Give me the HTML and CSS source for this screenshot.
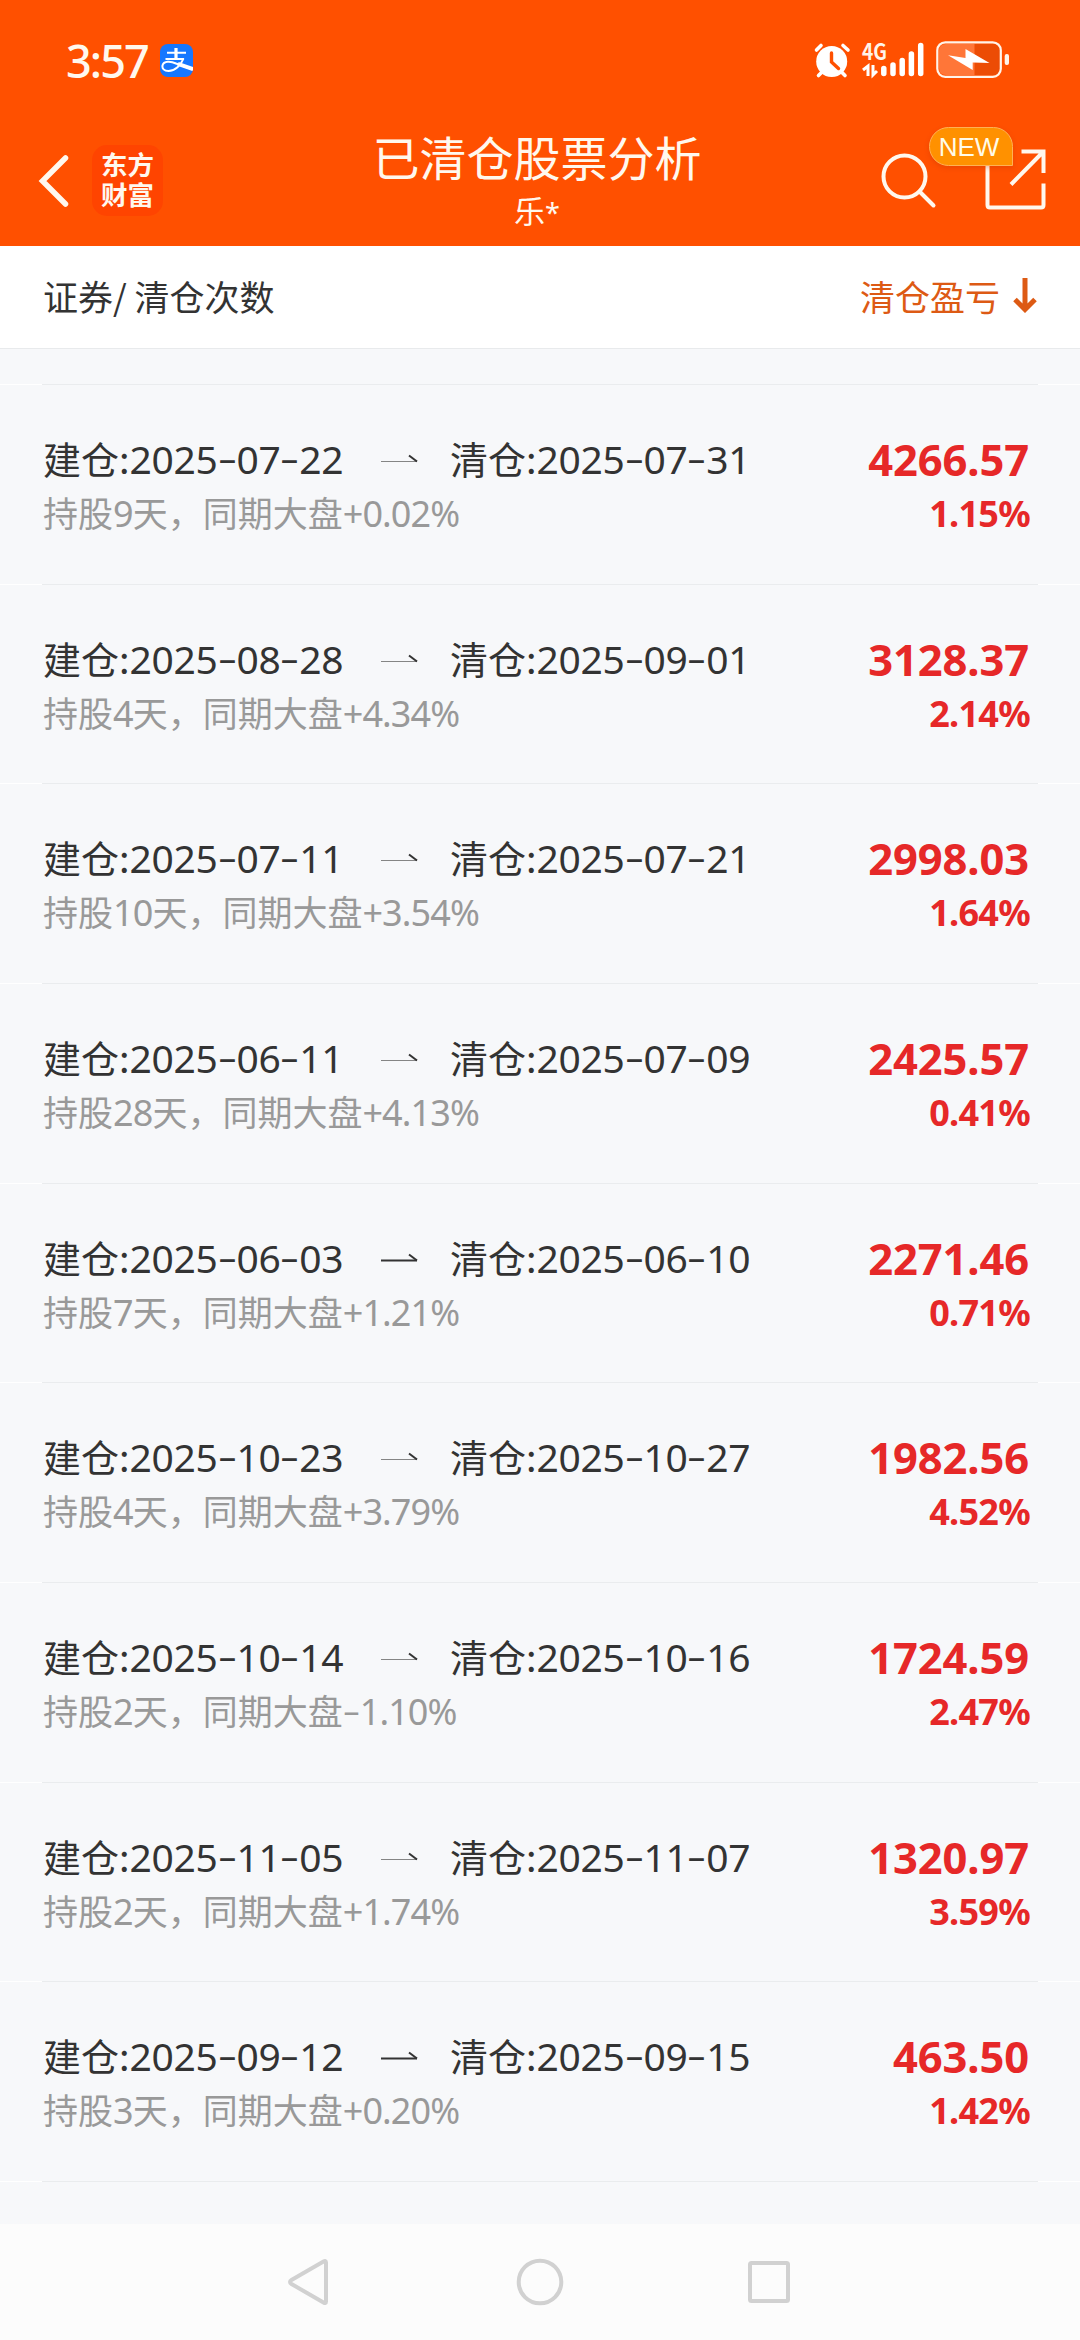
FILE: index.html
```html
<!DOCTYPE html>
<html lang="zh-CN">
<head>
<meta charset="utf-8">
<title>已清仓股票分析</title>
<link rel="stylesheet" href="styles.css">
</head>
<body>
<svg width="0" height="0" class="defs">
  <symbol id="arrow" viewBox="0 0 38 12"><path class="shaft" d="M0 8.500H36"/><path class="head" d="M28 2.500L36 8.500"/></symbol>
</svg>
<div class="screen">
  <header class="top">
    <div class="status">
      <div class="status-left">
        <span class="clock">3:57</span>
        <svg class="pay" viewBox="0 0 33 33"><rect width="33" height="33" rx="8" fill="#1677ff"/><g fill="none" stroke="#fff"><path d="M7 8.800H26M5.500 15H24" stroke-width="2"/><path d="M16 4V15" stroke-width="3.200"/><path d="M23.500 14.500C21 21 15 27 8.500 27C4 27 2 24.500 2.500 21.500C3.500 16.500 11 17 16 19.500L33 25.500" stroke-width="2"/><path d="M18 19.800L33 25" stroke-width="4"/></g></svg>
      </div>
      <svg class="status-right" viewBox="0 0 196 40" width="196" height="40">
        <g transform="translate(-814 -40)">
          <circle cx="831.700" cy="61.500" r="15.500" fill="#fff"/>
          <path d="M816.500 50L821 45.500M848 50L843 45.500M822 72L818.500 75.500M841.500 72L845 75.500" stroke="#fff" stroke-width="3.600" stroke-linecap="round"/>
          <path d="M831.500 53V62L838.500 68.500" fill="none" stroke="#ff5000" stroke-width="3.400" stroke-linecap="round"/>
          <text x="862" y="59.500" class="net" textLength="25" lengthAdjust="spacingAndGlyphs">4G</text>
          <path d="M863 70L868 66V76M873 65V75L877 71" fill="none" stroke="#fff" stroke-width="3"/>
          <path d="M883.800 68.500V73.500M893 65V73.500M902.200 60.500V73.500M911.400 54V73.500M920.700 45.500V73.500" stroke="#fff" stroke-width="5.500" stroke-linecap="round"/>
          <path d="M946 44H974.700V75H946Q939 75 939 68V51Q939 44 946 44" fill="#ff7638"/>
          <path d="M974.700 44H993Q1000 44 1000 51V68Q1000 75 993 75H974.700Z" fill="#ec4c05"/>
          <rect x="937.300" y="42.300" width="63.500" height="34.500" rx="8" fill="none" stroke="#fff4ea" stroke-width="2.200"/>
          <rect x="1004.700" y="54" width="4.300" height="11" rx="2" fill="#fff4ea"/>
          <path d="M948 55.300L965.500 58V49L989.500 63L972.700 62.500V70Z" fill="#fff"/>
        </g>
      </svg>
    </div>
    <nav class="bar">
      <div class="bar-left">
        <svg class="back" viewBox="0 0 32 54" width="32" height="54"><path d="M27.500 4L4.500 27L27.500 50" fill="none" stroke="#fff8ee" stroke-width="5.500" stroke-linecap="round"/></svg>
        <div class="logo"><span>东方</span><span>财富</span></div>
      </div>
      <div class="heading">
        <h1>已清仓股票分析</h1>
        <p>乐<span>*</span></p>
      </div>
      <div class="bar-right">
        <svg viewBox="0 0 56 56" width="56" height="56"><g fill="none" stroke="#fff8ee" stroke-width="4" stroke-linecap="round"><circle cx="23.500" cy="23.500" r="21"/><path d="M38.500 38.500L52.500 52.500"/></g></svg>
        <div class="share">
          <svg viewBox="0 0 61 61" width="61" height="61"><g fill="none" stroke="#fff8ee" stroke-width="4"><path d="M2.500 10V56Q2.500 58.500 5 58.500H56Q58.500 58.500 58.500 56V34.500"/><path d="M36.500 2.500H58.500V24M58 3L26 35.500"/></g></svg>
          <span class="badge">NEW</span>
        </div>
      </div>
    </nav>
  </header>

  <div class="columns">
    <span>证券/ 清仓次数</span>
    <span class="sort">清仓盈亏<svg viewBox="0 0 24 35" width="24" height="35"><path d="M12 0V31M2 21.500L12 31.500L22 21.500" fill="none" stroke="#dd5a14" stroke-width="5"/></svg></span>
  </div>

  <main class="list">
    <section class="row">
      <div class="trade"><div class="dates"><span class="open">建仓:<span class="num">2025<i>-</i>07<i>-</i>22</span></span><svg class="arrow"><use href="#arrow"/></svg><span>清仓:<span class="num">2025<i>-</i>07<i>-</i>31</span></span></div><p>持股<b>9</b>天，同期大盘<b>+0.02%</b></p></div>
      <div class="gain"><strong>4266.57</strong><em>1.15%</em></div>
    </section>
    <section class="row">
      <div class="trade"><div class="dates"><span class="open">建仓:<span class="num">2025<i>-</i>08<i>-</i>28</span></span><svg class="arrow"><use href="#arrow"/></svg><span>清仓:<span class="num">2025<i>-</i>09<i>-</i>01</span></span></div><p>持股<b>4</b>天，同期大盘<b>+4.34%</b></p></div>
      <div class="gain"><strong>3128.37</strong><em>2.14%</em></div>
    </section>
    <section class="row">
      <div class="trade"><div class="dates"><span class="open">建仓:<span class="num">2025<i>-</i>07<i>-</i>11</span></span><svg class="arrow"><use href="#arrow"/></svg><span>清仓:<span class="num">2025<i>-</i>07<i>-</i>21</span></span></div><p>持股<b>10</b>天，同期大盘<b>+3.54%</b></p></div>
      <div class="gain"><strong>2998.03</strong><em>1.64%</em></div>
    </section>
    <section class="row">
      <div class="trade"><div class="dates"><span class="open">建仓:<span class="num">2025<i>-</i>06<i>-</i>11</span></span><svg class="arrow"><use href="#arrow"/></svg><span>清仓:<span class="num">2025<i>-</i>07<i>-</i>09</span></span></div><p>持股<b>28</b>天，同期大盘<b>+4.13%</b></p></div>
      <div class="gain"><strong>2425.57</strong><em>0.41%</em></div>
    </section>
    <section class="row">
      <div class="trade"><div class="dates"><span class="open">建仓:<span class="num">2025<i>-</i>06<i>-</i>03</span></span><svg class="arrow bold"><use href="#arrow"/></svg><span>清仓:<span class="num">2025<i>-</i>06<i>-</i>10</span></span></div><p>持股<b>7</b>天，同期大盘<b>+1.21%</b></p></div>
      <div class="gain"><strong>2271.46</strong><em>0.71%</em></div>
    </section>
    <section class="row">
      <div class="trade"><div class="dates"><span class="open">建仓:<span class="num">2025<i>-</i>10<i>-</i>23</span></span><svg class="arrow"><use href="#arrow"/></svg><span>清仓:<span class="num">2025<i>-</i>10<i>-</i>27</span></span></div><p>持股<b>4</b>天，同期大盘<b>+3.79%</b></p></div>
      <div class="gain"><strong>1982.56</strong><em>4.52%</em></div>
    </section>
    <section class="row">
      <div class="trade"><div class="dates"><span class="open">建仓:<span class="num">2025<i>-</i>10<i>-</i>14</span></span><svg class="arrow"><use href="#arrow"/></svg><span>清仓:<span class="num">2025<i>-</i>10<i>-</i>16</span></span></div><p>持股<b>2</b>天，同期大盘<b><i>-</i>1.10%</b></p></div>
      <div class="gain"><strong>1724.59</strong><em>2.47%</em></div>
    </section>
    <section class="row">
      <div class="trade"><div class="dates"><span class="open">建仓:<span class="num">2025<i>-</i>11<i>-</i>05</span></span><svg class="arrow"><use href="#arrow"/></svg><span>清仓:<span class="num">2025<i>-</i>11<i>-</i>07</span></span></div><p>持股<b>2</b>天，同期大盘<b>+1.74%</b></p></div>
      <div class="gain"><strong>1320.97</strong><em>3.59%</em></div>
    </section>
    <section class="row">
      <div class="trade"><div class="dates"><span class="open">建仓:<span class="num">2025<i>-</i>09<i>-</i>12</span></span><svg class="arrow bold"><use href="#arrow"/></svg><span>清仓:<span class="num">2025<i>-</i>09<i>-</i>15</span></span></div><p>持股<b>3</b>天，同期大盘<b>+0.20%</b></p></div>
      <div class="gain"><strong>463.50</strong><em>1.42%</em></div>
    </section>
    <div class="row end"></div>
  </main>

  <footer class="system">
    <svg viewBox="0 0 48 48"><path d="M39 4.500V43.500Q39 46 36.500 44.500L4.500 26Q1.500 24 4.500 22L36.500 3.500Q39 2 39 4.500Z"/></svg>
    <svg viewBox="0 0 48 48"><circle cx="24" cy="24" r="21.300"/></svg>
    <svg viewBox="0 0 48 48"><rect x="5" y="5" width="38" height="38" rx="1.500"/></svg>
  </footer>
</div>
</body>
</html>
```
FILE: styles.css
```css
* { box-sizing: border-box; margin: 0; padding: 0; }

body {
  width: 1080px;
  font-family: "Noto Sans CJK SC", "Noto Sans", sans-serif;
  color: #333;
}

.defs { display: none; }
svg { display: block; flex: none; }

.screen {
  width: 1080px;
  height: 2340px;
  display: flex;
  flex-direction: column;
  overflow: hidden;
  background: #f7f8fa;
}

/* header */
.top { height: 246px; flex: none; background: #ff5000; color: #fff8ee; }

.status {
  height: 123px;
  display: flex;
  align-items: center;
  justify-content: space-between;
  padding: 0 70px 0 66px;
}
.status-left { display: flex; align-items: center; gap: 13px; }
.clock {
  width: 81px;
  font-family: "Noto Sans", sans-serif;
  font-size: 45px;
  line-height: 60px;
  margin-top: -2px;
  font-weight: 500;
  letter-spacing: -1.900px;
  white-space: nowrap;
}
.pay { width: 33px; height: 33px; margin-top: -2px; }
.status-right { margin-top: -3px; overflow: visible; }
.net { font-size: 22px; font-weight: 700; fill: #fff4ea; }

.bar {
  height: 123px;
  display: grid;
  grid-template-columns: 1fr auto 1fr;
  padding: 0 34px 0 38px;
}
.bar-left { display: flex; align-items: center; gap: 22px; height: 115px; }
.logo {
  display: flex;
  flex-direction: column;
  width: 71px;
  height: 71px;
  padding: 4px 0 0 9px;
  border-radius: 15px;
  background: #ff4400;
  font-size: 26.500px;
  font-weight: 700;
  line-height: 30px;
}
.heading { text-align: center; padding-top: 6px; transform: translateX(-5px); }
.heading h1 { font-size: 47px; line-height: 54px; font-weight: 400; }
.heading p { font-size: 31px; line-height: 30px; margin-top: 12px; }
.heading p span { font-family: "Noto Sans", sans-serif; font-size: 27px; line-height: 1; }
.bar-right {
  display: flex;
  align-items: flex-start;
  justify-content: flex-end;
  gap: 48px;
  padding-top: 29px;
}
.bar-right > svg { margin-top: 1px; }
.share { position: relative; margin-top: -3px; }
.badge {
  position: absolute;
  left: -56px;
  top: -22px;
  width: 84px;
  height: 39px;
  border: 1px solid #ffb154;
  border-radius: 20px 20px 0 20px;
  background: #ff9100;
  box-shadow: 0 2px 5px rgba(190, 50, 0, .3);
  color: #fffbe8;
  font: 26px/39px "Liberation Sans", sans-serif;
  text-align: center;
  padding-right: 4px;
}

/* column titles */
.columns {
  height: 103px;
  flex: none;
  display: flex;
  align-items: center;
  justify-content: space-between;
  padding: 0 43px 3px;
  background: #fff;
  border-bottom: 1px solid #e8eaec;
  font-size: 35px;
  line-height: 50px;
}
.sort { display: flex; align-items: center; gap: 13px; color: #dd5a14; }

/* closed positions */
.list { flex: 1; min-height: 0; padding-top: 35px; overflow: hidden; }
.row {
  height: 199.660px;
  display: flex;
  justify-content: space-between;
  padding: 46px 50px 0 43px;
  border-top: 1px solid;
  border-image: linear-gradient(90deg, #fff 43px, #eaecee 43px 1037px, #fff 1037px) 1;
}
.dates { display: flex; font-size: 38px; line-height: 54px; white-space: nowrap; }
.open { width: 338px; }
.arrow {
  --shaft: #858585;
  --weight: 1;
  width: 38px;
  height: 12px;
  margin: 22px 31px 0 0;
}
.arrow.bold { --shaft: #333; --weight: 1.8; }
.shaft { fill: none; stroke: var(--shaft); stroke-width: var(--weight); }
.head { fill: none; stroke: #333; stroke-width: 2; }
.num {
  font-family: "Noto Sans", sans-serif;
  font-size: 39px;
  line-height: 1;
  letter-spacing: -.3px;
}
i {
  display: inline-block;
  width: 18.800px;
  font-style: normal;
  letter-spacing: 0;
  text-align: center;
  transform: translateY(-1px) scale(1.550, .9);
}
.trade p { height: 54px; font-size: 35px; line-height: 54px; color: #999; white-space: nowrap; }
.trade p b {
  font-family: "Noto Sans", sans-serif;
  font-size: 36px;
  line-height: 1;
  font-weight: 400;
  letter-spacing: -.9px;
}
.trade p i { width: 17px; }
.gain {
  display: flex;
  flex-direction: column;
  align-items: flex-end;
  padding-top: 1px;
  font-family: "Noto Sans", sans-serif;
  color: #e62828;
  font-weight: 700;
  line-height: 54px;
}
.gain strong { font-size: 43.500px; font-weight: 700; letter-spacing: -.1px; margin-right: 1px; }
.gain em { font-size: 36px; line-height: 55px; font-style: normal; letter-spacing: -.7px; }
.end { padding: 0; }

/* system navigation */
.system {
  height: 116px;
  flex: none;
  display: flex;
  justify-content: center;
  gap: 181px;
  padding-top: 34px;
  background: #fcfcfc;
}
.system svg {
  width: 48px;
  height: 48px;
  fill: none;
  stroke: #d1d1d1;
  stroke-width: 4;
}
```
